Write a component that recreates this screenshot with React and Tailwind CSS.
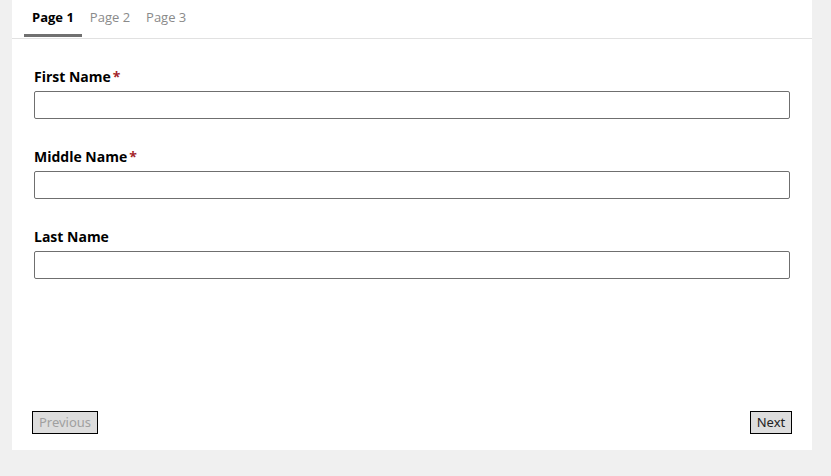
export default function App() {
  const fields = [
    { label: 'First Name', required: true },
    { label: 'Middle Name', required: true },
    { label: 'Last Name', required: false },
  ];

  return (
    <div className="w-[831px] h-[476px] bg-[#f0f0f0] font-['Open_Sans',sans-serif]">
      <div className="ml-[12px] w-[800px] h-[450px] bg-white flex flex-col">
        {/* tabs */}
        <div className="h-[39px] border-b border-[#e1e1e1] flex pl-[12px]">
          <div className="h-[37px] px-[8px] flex items-center border-b-[3px] border-[#707070] text-[13px] font-bold text-black pt-[1px]">
            Page 1
          </div>
          <div className="h-[37px] px-[8px] flex items-center text-[13px] text-[#8a8a8a] pb-[2px]">Page 2</div>
          <div className="h-[37px] px-[8px] flex items-center text-[13px] text-[#8a8a8a] pb-[2px]">Page 3</div>
        </div>

        {/* fields */}
        <div className="flex-1 px-[22px] pt-[28px] flex flex-col gap-[28px]">
          {fields.map((f) => (
            <div key={f.label} className="flex flex-col gap-[4px]">
              <label className="h-[20px] leading-[20px] text-[14px] font-bold text-black">
                {f.label}
                {f.required && <span className="text-[#a4262c] ml-[2px]">*</span>}
              </label>
              <input className="h-[28px] w-full border border-[#6f6f6f] rounded-[2px] outline-none" />
            </div>
          ))}
        </div>

        {/* footer */}
        <div className="flex justify-between px-[20px] pb-[16px]">
          <button className="h-[23px] w-[66px] bg-[#dddddd] border border-black text-[13px] text-[#a0a0a0] font-['Noto_Sans',sans-serif]">
            Previous
          </button>
          <button className="h-[23px] w-[42px] bg-[#dddddd] border border-black text-[13px] text-[#222] font-['Noto_Sans',sans-serif]">
            Next
          </button>
        </div>
      </div>
    </div>
  );
}
